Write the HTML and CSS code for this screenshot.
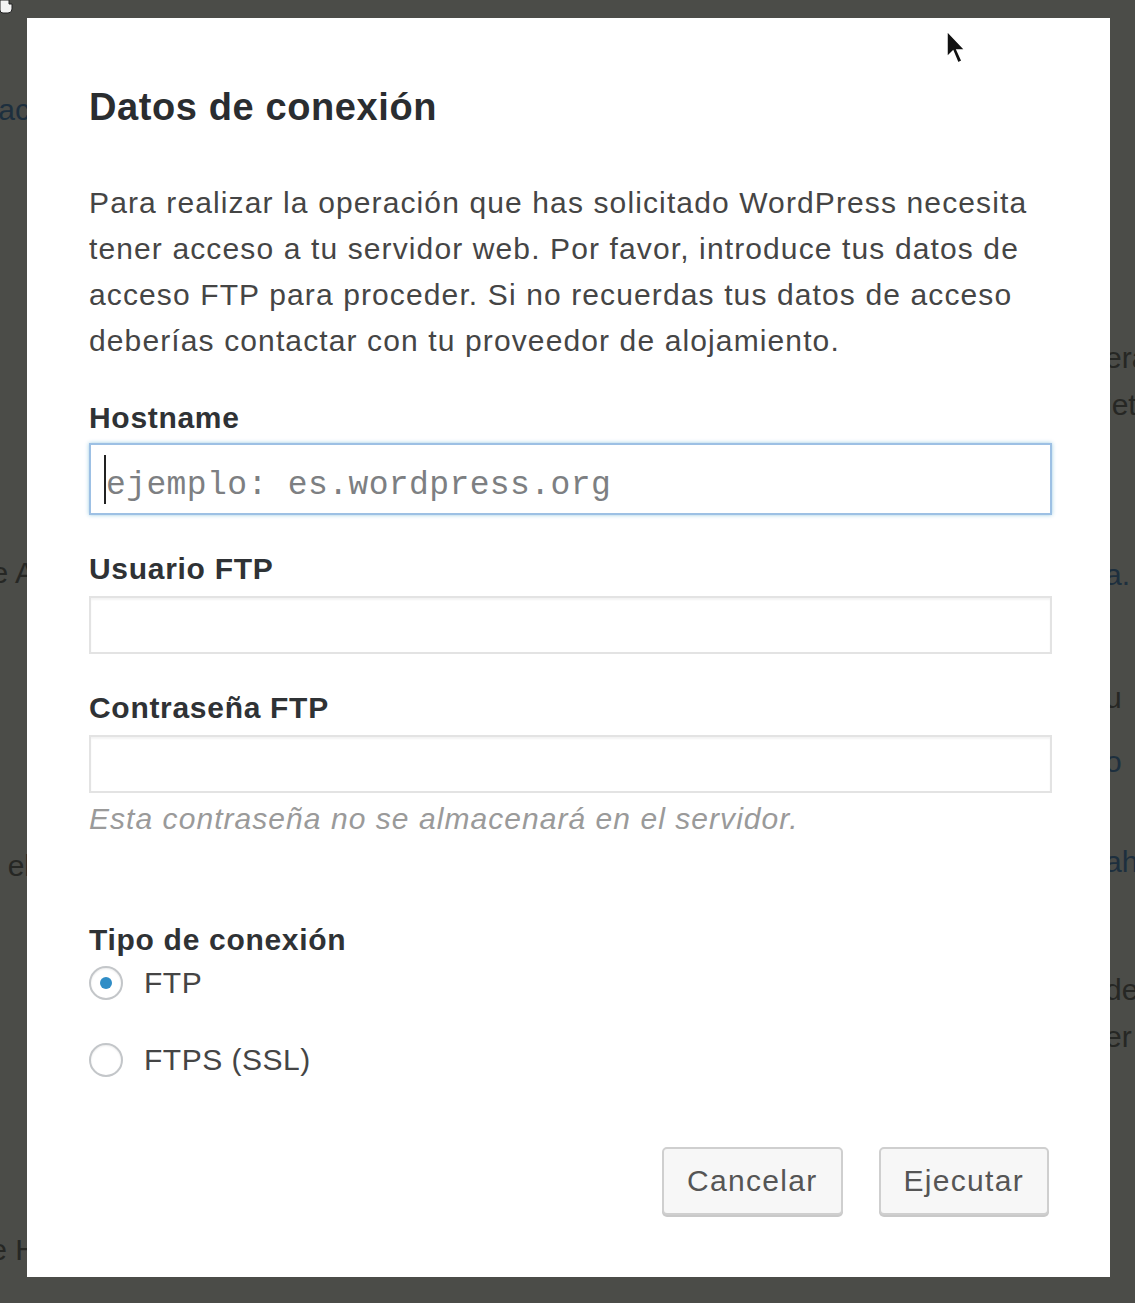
FILE: index.html
```html
<!DOCTYPE html>
<html lang="es">
<head>
<meta charset="utf-8">
<title>Datos de conexión</title>
<link rel="stylesheet" href="styles.css">
</head>
<body>
<div class="page">
  <div class="bg-col bg-left">
    <p class="bgt link l1">Reac</p>
    <p class="bgt l2">Cambiar de A</p>
    <p class="bgt l3">Usar el</p>
    <p class="bgt l4">Plantilla de H</p>
  </div>
  <div class="bg-col bg-right">
    <p class="bgt r1">era</p>
    <p class="bgt r2">iet</p>
    <p class="bgt link r3">a.</p>
    <p class="bgt r4">u</p>
    <p class="bgt link r5">o</p>
    <p class="bgt link r6">ah</p>
    <p class="bgt r7">de</p>
    <p class="bgt r8">er</p>
  </div>
</div>

<div class="modal">
  <h1 class="title">Datos de conexión</h1>
  <p class="intro">Para realizar la operación que has solicitado WordPress necesita<br>tener acceso a tu servidor web. Por favor, introduce tus datos de<br>acceso FTP para proceder. Si no recuerdas tus datos de acceso<br>deberías contactar con tu proveedor de alojamiento.</p>

  <label class="field-label first" for="hostname">Hostname</label>
  <div class="host-wrap">
    <input id="hostname" class="input input-host" type="text" placeholder="ejemplo: es.wordpress.org">
    <span class="caret"></span>
  </div>

  <label class="field-label" for="user">Usuario FTP</label>
  <input id="user" class="input" type="text">

  <label class="field-label" for="pass">Contraseña FTP</label>
  <input id="pass" class="input" type="password">
  <p class="hint">Esta contraseña no se almacenará en el servidor.</p>

  <p class="field-label type-label">Tipo de conexión</p>
  <div class="radio-row">
    <span class="radio checked"></span>
    <span class="radio-text">FTP</span>
  </div>
  <div class="radio-row second">
    <span class="radio"></span>
    <span class="radio-text">FTPS (SSL)</span>
  </div>

  <div class="actions">
    <button class="btn" type="button">Cancelar</button>
    <button class="btn" type="button">Ejecutar</button>
  </div>
</div>

<svg class="cursor-arrow" width="24" height="36" viewBox="0 0 24 36">
  <path d="M2 1 L2 27 L8 21 L13 33 L17 31 L12 20 L20 20 Z" fill="#111" stroke="#fff" stroke-width="1.5"/>
</svg>
<svg class="cursor-hand" width="14" height="14" viewBox="0 0 14 14">
  <path d="M0 0 H9 V4 H12 V9 Q12 13 8 13 H3 Q0 13 0 10 Z" fill="#f4f4f4" stroke="#222" stroke-width="1"/>
</svg>
</body>
</html>
```

FILE: styles.css
```css
html, body {
  margin: 0;
  padding: 0;
}

body {
  width: 1135px;
  height: 1303px;
  overflow: hidden;
  position: relative;
  background: #4b4c48;
  font-family: "Liberation Sans", Arial, sans-serif;
}

.page {
  display: flex;
  justify-content: space-between;
  height: 1303px;
}

.bg-col {
  overflow: hidden;
  white-space: nowrap;
}

.bg-left {
  width: 27px;
  display: flex;
  flex-direction: column;
  align-items: flex-end;
}

.bg-right {
  width: 30px;
}

.bgt {
  margin: 0;
  font-size: 30px;
  line-height: 40px;
  color: #262724;
}

.bgt.link {
  color: #1d2f3e;
}

.l1 { margin-top: 90px; margin-right: -3px; }
.l2 { margin-top: 423px; margin-right: -8px; }
.l3 { margin-top: 253px; margin-right: -4px; }
.l4 { margin-top: 344px; margin-right: -10px; }

.r1 { margin-top: 338px; }
.r2 { margin-top: 7px; }
.r3 { margin-top: 130px; }
.r4 { margin-top: 83px; }
.r5 { margin-top: 24px; }
.r6 { margin-top: 60px; }
.r7 { margin-top: 88px; }
.r8 { margin-top: 7px; }

.modal {
  position: absolute;
  left: 27px;
  top: 18px;
  width: 1083px;
  height: 1259px;
  box-sizing: border-box;
  padding: 66px 58px 0 62px;
  background: #fff;
  display: flex;
  flex-direction: column;
  color: #444;
}

.title {
  margin: 0;
  font-size: 38px;
  line-height: 46px;
  font-weight: bold;
  color: #2a2d30;
  letter-spacing: 0.6px;
}

.intro {
  margin: 50px 0 0;
  font-size: 30px;
  line-height: 46px;
  letter-spacing: 1.12px;
  color: #454545;
  white-space: nowrap;
}

.field-label {
  display: block;
  margin: 34px 0 0;
  font-size: 30px;
  line-height: 40px;
  font-weight: bold;
  letter-spacing: 0.7px;
  color: #2f3235;
}

.field-label.first {
  margin-top: 34px;
}

.input {
  display: block;
  box-sizing: border-box;
  width: 963px;
  height: 58px;
  margin: 7px 0 0;
  padding: 0 15px;
  border: 2px solid #e3e3e3;
  border-radius: 0;
  box-shadow: inset 0 2px 2px rgba(0, 0, 0, 0.05);
  background: #fff;
  outline: none;
}

.host-wrap {
  position: relative;
  margin-top: 5px;
}

.input-host {
  margin: 0;
  height: 72px;
  padding-top: 12px;
  border: 2px solid #9dc0e4;
  box-shadow: 0 0 4px rgba(30, 140, 190, 0.45);
  font-family: "Liberation Mono", "DejaVu Sans Mono", monospace;
  font-size: 33px;
  letter-spacing: 0.4px;
  color: #333;
}

.input-host::placeholder {
  color: #7d7f82;
  opacity: 1;
}

.caret {
  position: absolute;
  left: 15px;
  top: 12px;
  width: 2px;
  height: 49px;
  background: #222;
}

.hint {
  margin: 6px 0 0;
  font-size: 30px;
  line-height: 40px;
  font-style: italic;
  letter-spacing: 1.05px;
  color: #9a9a9a;
}

.type-label {
  margin-top: 81px;
}

.radio-row {
  display: flex;
  align-items: center;
  gap: 21px;
  height: 46px;
}

.radio-row.second {
  margin-top: 31px;
}

.radio {
  box-sizing: border-box;
  width: 34px;
  height: 34px;
  border-radius: 50%;
  border: 2px solid #c3c6c9;
  box-shadow: inset 0 1px 2px rgba(0, 0, 0, 0.08);
  display: flex;
  align-items: center;
  justify-content: center;
}

.radio.checked::after {
  content: "";
  width: 12px;
  height: 12px;
  border-radius: 50%;
  background: #2f8dc6;
}

.radio-text {
  font-size: 30px;
  line-height: 40px;
  letter-spacing: 0.5px;
  color: #454545;
}

.actions {
  display: flex;
  justify-content: flex-end;
  gap: 36px;
  margin: 64px 3px 0 0;
}

.btn {
  height: 68px;
  padding: 0 23px;
  border: 2px solid #cfcfcf;
  border-radius: 5px;
  background: #f7f7f7;
  box-shadow: 0 2px 0 #c9c9c9;
  font-family: "Liberation Sans", Arial, sans-serif;
  font-size: 30px;
  letter-spacing: 1.3px;
  color: #555;
}

.cursor-arrow {
  position: absolute;
  left: 945px;
  top: 30px;
}

.cursor-hand {
  position: absolute;
  left: 0;
  top: 0;
}
```
